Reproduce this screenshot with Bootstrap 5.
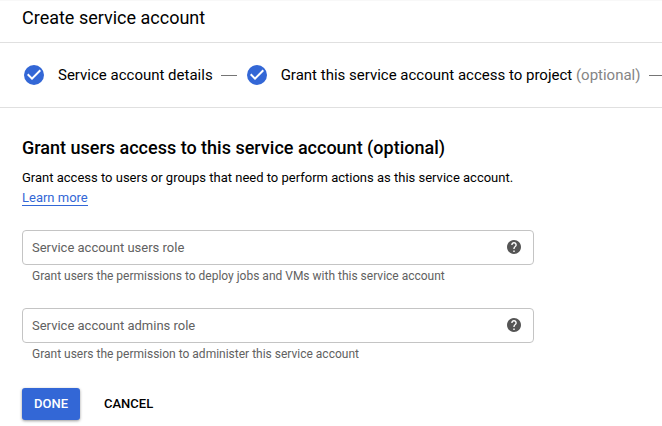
<!DOCTYPE html>
<html lang="en">
<head>
<meta charset="utf-8">
<meta name="viewport" content="width=device-width, initial-scale=1">
<title>Create service account</title>
<link href="https://cdn.jsdelivr.net/npm/bootstrap@5.3.0/dist/css/bootstrap.min.css" rel="stylesheet">
<style>
  body { font-family: Roboto, Arial, sans-serif; font-size: 13px; line-height: 20px; color: #000; background: #fff; }
  .page-head { padding: 5px 22px 12px; border-top: 1px solid #f8f8f8; border-bottom: 1px solid #e0e0e0; }
  .page-head h1 { font-size: 18px; line-height: 24px; font-weight: 400; }
  .steps { gap: 8px; padding: 20px 0 20px 22px; border-bottom: 1px solid #e0e0e0; font-size: 15px; line-height: 24px; }
  .step { gap: 12px; }
  .step-line { width: 16px; height: 1px; background: #757575; }
  .muted { color: #858585; }
  .form-area { padding: 28px 22px 6px; }
  .form-area h2 { font-size: 18px; line-height: 24px; font-weight: 500; }
  .more-link { color: #3367d6; border-bottom: 1px solid #3367d6; line-height: 14px; }
  .role-form { margin-top: 22px; }
  .role-field { max-width: 512px; }
  .role-input { height: 35px; padding: 0 40px 0 9px; font-size: 13px; border: 1px solid #c4c4c4; border-radius: 4px; }
  .role-label { top: 8px; left: 10px; color: #616161; pointer-events: none; }
  .role-input:not(:placeholder-shown) + .role-label { display: none; }
  .help { top: 10px; right: 13px; }
  .hint { font-size: 12px; line-height: 16px; padding: 3px 10px 0; color: #616161; }
  .actions { gap: 12px; padding-top: 2px; }
  .action { font-size: 13px; line-height: 20px; font-weight: 500; padding: 6px 12px; border: 0; border-radius: 3px; color: #000; }
  .action-main { color: #fff; background: #3367d6; box-shadow: 0 1px 3px rgba(0,0,0,.4); }
</style>
</head>
<body>
<header class="page-head"><h1 class="m-0">Create service account</h1></header>
<ol class="steps list-unstyled d-flex align-items-center m-0 overflow-hidden text-nowrap">
  <li class="step d-flex align-items-center flex-shrink-0">
    <svg width="24" height="24" viewBox="0 0 24 24" aria-hidden="true"><circle cx="12" cy="12" r="10" fill="#3367d6"/><path d="M10 17l-5-5 1.4-1.4 3.6 3.6 7.6-7.6L19 8z" fill="#fff"/></svg>
    <span>Service account details</span>
  </li>
  <li class="step-line flex-shrink-0" aria-hidden="true"></li>
  <li class="step d-flex align-items-center flex-shrink-0">
    <svg width="24" height="24" viewBox="0 0 24 24" aria-hidden="true"><circle cx="12" cy="12" r="10" fill="#3367d6"/><path d="M10 17l-5-5 1.4-1.4 3.6 3.6 7.6-7.6L19 8z" fill="#fff"/></svg>
    <span>Grant this service account access to project <span class="muted">(optional)</span></span>
  </li>
  <li class="step-line flex-shrink-0" aria-hidden="true"></li>
</ol>
<main class="form-area">
  <h2 class="mb-2">Grant users access to this service account (optional)</h2>
  <p class="mb-0">Grant access to users or groups that need to perform actions as this service account.</p>
  <a href="#" class="more-link d-inline-block text-decoration-none">Learn more</a>
  <form class="role-form">
    <div class="role-field mb-4">
      <div class="position-relative">
        <input id="users-role" class="role-input form-control" type="text" placeholder=" " aria-describedby="users-hint">
        <label class="role-label position-absolute" for="users-role">Service account users role</label>
        <button type="button" class="help btn p-0 border-0 d-flex position-absolute" aria-label="Help"><svg width="14" height="14" viewBox="2 2 20 20" fill="#555"><path d="M12 2C6.48 2 2 6.48 2 12s4.48 10 10 10 10-4.48 10-10S17.52 2 12 2zm1 17h-2v-2h2v2zm2.07-7.75l-.9.92C13.45 12.9 13 13.5 13 15h-2v-.5c0-1.1.45-2.1 1.17-2.83l1.24-1.26c.37-.36.59-.86.59-1.41 0-1.1-.9-2-2-2s-2 .9-2 2H8c0-2.21 1.79-4 4-4s4 1.79 4 4c0 .88-.36 1.68-.93 2.25z"/></svg></button>
      </div>
      <div id="users-hint" class="hint">Grant users the permissions to deploy jobs and VMs with this service account</div>
    </div>
    <div class="role-field mb-4">
      <div class="position-relative">
        <input id="admins-role" class="role-input form-control" type="text" placeholder=" " aria-describedby="admins-hint">
        <label class="role-label position-absolute" for="admins-role">Service account admins role</label>
        <button type="button" class="help btn p-0 border-0 d-flex position-absolute" aria-label="Help"><svg width="14" height="14" viewBox="2 2 20 20" fill="#555"><path d="M12 2C6.48 2 2 6.48 2 12s4.48 10 10 10 10-4.48 10-10S17.52 2 12 2zm1 17h-2v-2h2v2zm2.07-7.75l-.9.92C13.45 12.9 13 13.5 13 15h-2v-.5c0-1.1.45-2.1 1.17-2.83l1.24-1.26c.37-.36.59-.86.59-1.41 0-1.1-.9-2-2-2s-2 .9-2 2H8c0-2.21 1.79-4 4-4s4 1.79 4 4c0 .88-.36 1.68-.93 2.25z"/></svg></button>
      </div>
      <div id="admins-hint" class="hint">Grant users the permission to administer this service account</div>
    </div>
    <div class="actions d-flex">
      <button type="submit" class="action action-main btn btn-primary">DONE</button>
      <button type="button" class="action btn">CANCEL</button>
    </div>
  </form>
</main>
<script src="https://cdn.jsdelivr.net/npm/bootstrap@5.3.0/dist/js/bootstrap.bundle.min.js"></script>
</body>
</html>
